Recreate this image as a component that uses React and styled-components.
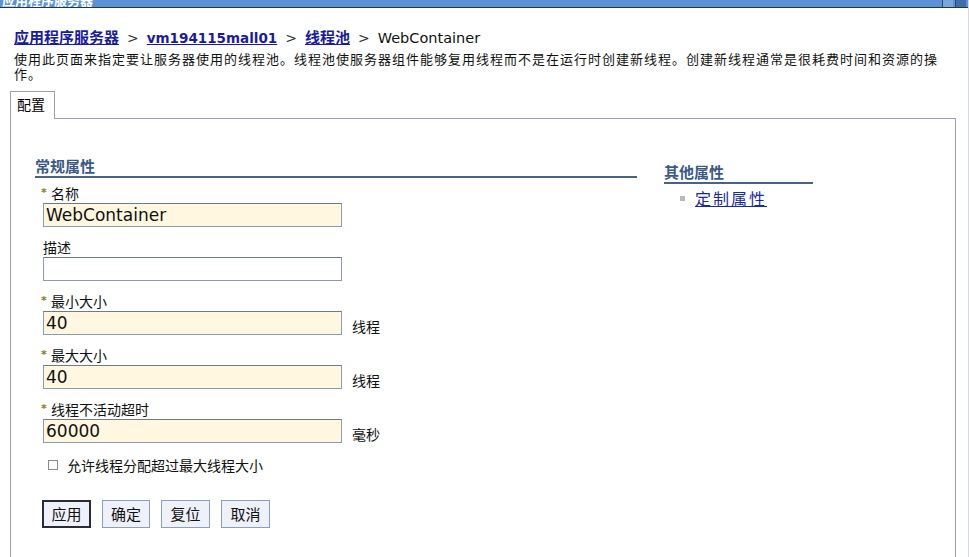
import React from 'react'
import styled, { createGlobalStyle } from 'styled-components'

const GlobalStyle = createGlobalStyle`
  html, body {
    margin: 0;
    background: #ffffff;
    font-family: "DejaVu Sans", "Noto Sans CJK SC", sans-serif;
    color: #000;
  }
  * { box-sizing: border-box; }
`

const Page = styled.div`
  width: 969px;
  height: 557px;
  overflow: hidden;
  border-right: 1px solid #d8d8e0;
`

const TitleBar = styled.div`
  height: 8px;
  background: #5b93d6;
  border-bottom: 1px solid #23344f;
  display: flex;
  justify-content: space-between;
  overflow: hidden;
`

const TitleText = styled.span`
  margin-top: -7px;
  margin-left: 2px;
  font: bold 13px/14px "Noto Sans CJK SC", sans-serif;
  color: #ffffff;
`

const WinButtons = styled.div`
  display: flex;
  gap: 2px;
  margin-right: 2px;
`

const WinButton = styled.span`
  width: 11px;
  height: 8px;
  background: ${p => (p.$dark ? '#3e6fa8' : '#7aa6da')};
  border-left: 1px solid #2c4a74;
`

const Content = styled.div`
  padding: 19px 0 0 10px;
`

const Breadcrumb = styled.div`
  padding-left: 4px;
  font-size: 15px;
  line-height: 20px;
  display: flex;
  align-items: baseline;
  gap: 8px;
`

const Crumb = styled.a`
  font-weight: bold;
  font-size: ${p => (p.$cjk ? '15px' : '13.5px')};
  font-family: ${p => (p.$cjk ? '"Noto Sans CJK SC", sans-serif' : '"DejaVu Sans", sans-serif')};
  color: #1b1ba0;
  text-decoration: underline;
`

const Sep = styled.span`
  color: #333;
  font-size: 14px;
`

const Current = styled.span`
  color: #111;
  font-size: 14.5px;
`

const Description = styled.p`
  margin: 3px 0 0 4px;
  width: 932px;
  font: 13px/15px "Noto Sans CJK SC", sans-serif;
  letter-spacing: 1px;
  color: #111;
`

const Tab = styled.div`
  margin-top: 10px;
  width: 45px;
  height: 28px;
  border: 1px solid #9c9cb4;
  border-bottom: none;
  background: #fff;
  padding: 2px 0 0 6px;
  font: 14px/20px "Noto Sans CJK SC", sans-serif;
  position: relative;
  z-index: 1;
  margin-bottom: -1px;
`

const Panel = styled.div`
  width: 946px;
  height: 460px;
  border: 1px solid #9c9cb4;
  border-bottom: none;
  padding: 38px 0 0 24px;
  display: grid;
  grid-template-columns: 602px 149px;
  column-gap: 27px;
  align-items: start;
`

const Column = styled.div`
  display: flex;
  flex-direction: column;
`

const SectionTitle = styled.div`
  font: bold 15px/18px "Noto Sans CJK SC", sans-serif;
  color: #3a5a85;
  border-bottom: 2px solid #4a6283;
  padding-bottom: 1px;
  margin-top: ${p => p.$offset || 0}px;
  margin-bottom: ${p => p.$after || 0}px;
`

const Field = styled.div`
  margin-left: 8px;
  margin-bottom: 11px;
  display: flex;
  flex-direction: column;
`

const Label = styled.label`
  font: 14px/18px "Noto Sans CJK SC", sans-serif;
  color: #111;
  display: flex;
  align-items: center;
  margin-bottom: 1px;
`

const Star = styled.span`
  width: 10px;
  margin-left: -2px;
  color: #8b7a1e;
  font: bold 11px/18px "DejaVu Sans", sans-serif;
`

const InputRow = styled.div`
  display: flex;
  align-items: flex-end;
  gap: 10px;
`

const TextInput = styled.input`
  width: 299px;
  height: 24px;
  border: 1px solid #8f9aab;
  border-top-color: #6f7a8b;
  background: ${p => (p.$required ? '#fff7e0' : '#ffffff')};
  padding: 0 2px;
  font: 17px "DejaVu Sans", sans-serif;
  color: #111;
  outline: none;
`

const Unit = styled.span`
  font: 14px/20px "Noto Sans CJK SC", sans-serif;
  color: #111;
  margin-bottom: -1px;
`

const CheckRow = styled.label`
  margin: 2px 0 0 13px;
  display: flex;
  align-items: center;
  gap: 9px;
  font: 14px/18px "Noto Sans CJK SC", sans-serif;
  color: #111;
`

const Box = styled.span`
  width: 10px;
  height: 10px;
  border: 1px solid #8a8a8a;
  background: #fbfbfb;
`

const ButtonBar = styled.div`
  margin: 26px 0 0 7px;
  display: flex;
  gap: 11px;
`

const Button = styled.button`
  height: 28px;
  width: ${p => p.$w || 48}px;
  padding: 0;
  background: #eef0fa;
  border: ${p => (p.$primary ? '2px solid #2b2b35' : '1px solid #8d9dbc')};
  font: 15px/24px "Noto Sans CJK SC", sans-serif;
  color: #111;
`

const LinkList = styled.ul`
  list-style: none;
  margin: 3px 0 0 16px;
  padding: 0;
`

const LinkItem = styled.li`
  display: flex;
  align-items: center;
  gap: 10px;
`

const Bullet = styled.span`
  width: 5px;
  height: 5px;
  background: #b8b8c0;
`

const PropLink = styled.a`
  font: 16px/22px "Noto Sans CJK SC", sans-serif;
  letter-spacing: 2px;
  color: #1b2a9c;
  text-decoration: underline;
`

const fields = [
  { label: '名称', value: 'WebContainer', required: true },
  { label: '描述', value: '', required: false },
  { label: '最小大小', value: '40', required: true, unit: '线程' },
  { label: '最大大小', value: '40', required: true, unit: '线程' },
  { label: '线程不活动超时', value: '60000', required: true, unit: '毫秒' },
]

const App = () => {
  return (
    <Page>
      <GlobalStyle />
      <TitleBar>
        <TitleText>应用程序服务器</TitleText>
        <WinButtons>
          <WinButton />
          <WinButton $dark />
        </WinButtons>
      </TitleBar>

      <Content>
        <Breadcrumb>
          <Crumb $cjk>应用程序服务器</Crumb>
          <Sep>&gt;</Sep>
          <Crumb>vm194115mall01</Crumb>
          <Sep>&gt;</Sep>
          <Crumb $cjk>线程池</Crumb>
          <Sep>&gt;</Sep>
          <Current>WebContainer</Current>
        </Breadcrumb>
        <Description>
          使用此页面来指定要让服务器使用的线程池。线程池使服务器组件能够复用线程而不是在运行时创建新线程。创建新线程通常是很耗费时间和资源的操作。
        </Description>

        <Tab>配置</Tab>
        <Panel>
          {/* general properties */}
          <Column>
            <SectionTitle $after={6}>常规属性</SectionTitle>
            {fields.map(f => (
              <Field key={f.label}>
                <Label>
                  {f.required && <Star>*</Star>}
                  {f.label}
                </Label>
                <InputRow>
                  <TextInput $required={f.required} defaultValue={f.value} />
                  {f.unit && <Unit>{f.unit}</Unit>}
                </InputRow>
              </Field>
            ))}
            <CheckRow>
              <Box />
              允许线程分配超过最大线程大小
            </CheckRow>
            <ButtonBar>
              <Button $primary $w={49}>应用</Button>
              <Button $w={48}>确定</Button>
              <Button $w={49}>复位</Button>
              <Button $w={49}>取消</Button>
            </ButtonBar>
          </Column>

          {/* additional properties */}
          <Column>
            <SectionTitle $offset={6}>其他属性</SectionTitle>
            <LinkList>
              <LinkItem>
                <Bullet />
                <PropLink>定制属性</PropLink>
              </LinkItem>
            </LinkList>
          </Column>
        </Panel>
      </Content>
    </Page>
  )
}

export default App
